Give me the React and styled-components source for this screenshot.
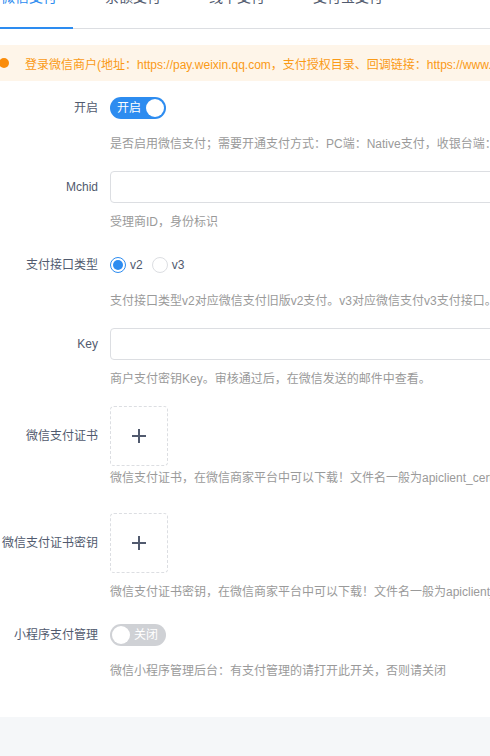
import React from "react";
import styled, { createGlobalStyle } from "styled-components";

const Global = createGlobalStyle`
  html, body { margin: 0; padding: 0; background: #fff; }
  body { font-family: "Liberation Sans", "Noto Sans CJK SC", sans-serif; overflow: hidden; }
  #root { width: 490px; overflow: hidden; }
`;

const Page = styled.div`
  display: flex;
  flex-direction: column;
  min-height: 100vh;
  width: 490px;
  overflow: hidden;
`;

const TabBar = styled.div`
  position: relative;
  display: flex;
  gap: 48px;
  margin-top: -13px;
  padding-left: 1px;
  border-bottom: 1px solid #dcdee2;
  white-space: nowrap;
`;

const Tab = styled.div`
  font-size: 14px;
  line-height: 20px;
  height: 20px;
  padding-bottom: 21px;
  color: ${(p) => (p.$active ? "#2d8cf0" : "#515a6e")};
`;

const ActiveBar = styled.div`
  position: absolute;
  left: 0;
  bottom: -1px;
  width: 73px;
  height: 2px;
  background: #2d8cf0;
`;

const Alert = styled.div`
  margin-top: 16px;
  height: 36px;
  display: flex;
  align-items: center;
  background: #fef5e9;
  color: #fa9a16;
  font-size: 12px;
  white-space: nowrap;
  overflow: hidden;
`;

const AlertDot = styled.span`
  flex: none;
  width: 10px;
  height: 10px;
  border-radius: 50%;
  background: #fa8c0a;
  margin-left: -1px;
  margin-right: 16px;
`;

const Form = styled.div`
  padding-top: 11px;
  padding-bottom: 36px;
`;

const Item = styled.div`
  display: grid;
  grid-template-columns: 110px 1fr;
  margin-bottom: ${(p) => (p.$last ? "0" : p.$tight ? "24.5px" : "17px")};
`;

const Label = styled.div`
  grid-column: 1;
  grid-row: 1;
  align-self: center;
  text-align: right;
  padding-right: 12px;
  font-size: 12px;
  line-height: 20px;
  height: 20px;
  color: #515a6e;
  white-space: nowrap;
`;

const Control = styled.div`
  grid-column: 2;
  grid-row: 1;
  min-height: 32px;
  display: flex;
  align-items: center;
`;

const Help = styled.div`
  grid-column: 2;
  grid-row: 2;
  margin-top: ${(p) => (p.$tight ? "2px" : "9.5px")};
  font-size: 12px;
  line-height: 20px;
  height: 20px;
  color: #9a9a9a;
  white-space: nowrap;
`;

const SwitchTrack = styled.div`
  width: 56px;
  height: 22px;
  border-radius: 11px;
  box-sizing: border-box;
  background: ${(p) => (p.$on ? "#2d8cf0" : "#cfd1d5")};
  display: flex;
  align-items: center;
  flex-direction: ${(p) => (p.$on ? "row" : "row-reverse")};
  padding: 0 2px;
  justify-content: space-between;
`;

const SwitchText = styled.span`
  color: #fff;
  font-size: 12px;
  line-height: 22px;
  height: 22px;
  padding: ${(p) => (p.$on ? "0 0 0 5px" : "0 6px 0 0")};
`;

const Knob = styled.span`
  width: 18px;
  height: 18px;
  border-radius: 50%;
  background: #fff;
`;

const Input = styled.div`
  width: 420px;
  height: 32px;
  box-sizing: border-box;
  border: 1px solid #dcdee2;
  border-radius: 4px;
  background: #fff;
  flex: none;
`;

const RadioGroup = styled.div`
  display: flex;
  align-items: center;
  gap: 9px;
`;

const RadioOpt = styled.label`
  display: flex;
  align-items: center;
  gap: 4px;
  font-size: 12px;
  line-height: 16px;
  height: 16px;
  color: #515a6e;
`;

const RadioCircle = styled.span`
  width: 16px;
  height: 16px;
  box-sizing: border-box;
  border-radius: 50%;
  border: 1px solid ${(p) => (p.$checked ? "#2d8cf0" : "#dcdee2")};
  display: flex;
  align-items: center;
  justify-content: center;
  &::after {
    content: "";
    display: ${(p) => (p.$checked ? "block" : "none")};
    width: 10px;
    height: 10px;
    border-radius: 50%;
    background: #2d8cf0;
  }
`;

const UploadBox = styled.div`
  width: 58px;
  height: 60px;
  box-sizing: border-box;
  border: 1px dashed #dcdee2;
  border-radius: 4px;
  display: flex;
  align-items: center;
  justify-content: center;
`;

const Footer = styled.div`
  flex: 1;
  background: #f5f7f9;
  min-height: 40px;
`;

const Plus = () => (
  <svg width="14" height="14" viewBox="0 0 14 14">
    <path d="M7 0v14M0 7h14" stroke="#515a6e" strokeWidth="2" fill="none" />
  </svg>
);

const Switch = ({ on }) => (
  <SwitchTrack $on={on}>
    <SwitchText $on={on}>{on ? "开启" : "关闭"}</SwitchText>
    <Knob />
  </SwitchTrack>
);

const Radio = ({ checked, children }) => (
  <RadioOpt>
    <RadioCircle $checked={checked} />
    {children}
  </RadioOpt>
);

export default function App() {
  return (
    <Page>
      <Global />
      <TabBar>
        <Tab $active>微信支付</Tab>
        <Tab>余额支付</Tab>
        <Tab>线下支付</Tab>
        <Tab>支付宝支付</Tab>
        <ActiveBar />
      </TabBar>
      <Alert>
        <AlertDot />
        登录微信商户(地址：https://pay.weixin.qq.com，支付授权目录、回调链接：https://www.example.com/api/pay/notify)
      </Alert>
      <Form>
        <Item>
          <Label>开启</Label>
          <Control>
            <Switch on />
          </Control>
          <Help>是否启用微信支付；需要开通支付方式：PC端：Native支付，收银台端：JSAPI支付</Help>
        </Item>
        <Item>
          <Label>Mchid</Label>
          <Control>
            <Input />
          </Control>
          <Help>受理商ID，身份标识</Help>
        </Item>
        <Item>
          <Label>支付接口类型</Label>
          <Control>
            <RadioGroup>
              <Radio checked>v2</Radio>
              <Radio>v3</Radio>
            </RadioGroup>
          </Control>
          <Help>支付接口类型v2对应微信支付旧版v2支付。v3对应微信支付v3支付接口。</Help>
        </Item>
        <Item>
          <Label>Key</Label>
          <Control>
            <Input />
          </Control>
          <Help>商户支付密钥Key。审核通过后，在微信发送的邮件中查看。</Help>
        </Item>
        <Item $tight>
          <Label>微信支付证书</Label>
          <Control>
            <UploadBox>
              <Plus />
            </UploadBox>
          </Control>
          <Help $tight>微信支付证书，在微信商家平台中可以下载！文件名一般为apiclient_cert.pem</Help>
        </Item>
        <Item>
          <Label>微信支付证书密钥</Label>
          <Control>
            <UploadBox>
              <Plus />
            </UploadBox>
          </Control>
          <Help>微信支付证书密钥，在微信商家平台中可以下载！文件名一般为apiclient_key.pem</Help>
        </Item>
        <Item $last>
          <Label>小程序支付管理</Label>
          <Control>
            <Switch on={false} />
          </Control>
          <Help>微信小程序管理后台：有支付管理的请打开此开关，否则请关闭</Help>
        </Item>
      </Form>
      <Footer />
    </Page>
  );
}
